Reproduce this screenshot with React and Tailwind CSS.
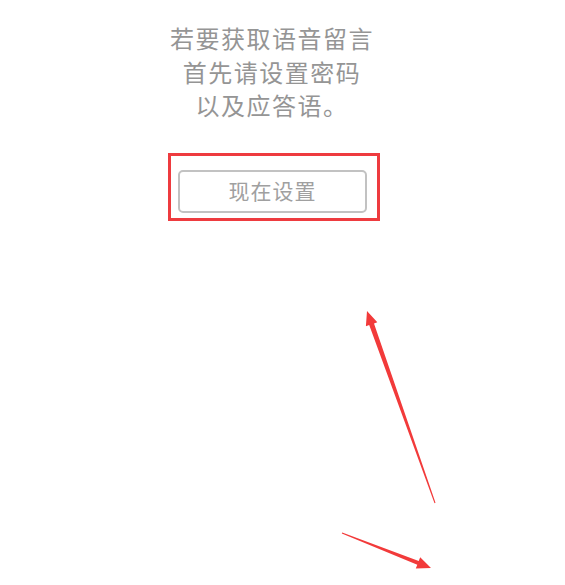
export default function App() {
  return (
    <div className="relative w-[565px] h-[585px] bg-white overflow-hidden" style={{ fontFamily: '"Noto Sans CJK SC", "Noto Sans", sans-serif' }}>
      <div className="flex flex-col items-center pt-[21px] pr-[21px]">
        <div className="text-[24px] leading-[33.5px] tracking-[1.5px] text-[#959595] text-center">
          <div>若要获取语音留言</div>
          <div>首先请设置密码</div>
          <div>以及应答语。</div>
        </div>
      </div>
      <div className="ml-[168px] mt-[31px] w-[212px] h-[68px] border-[3px] border-[#ee3b3f] pl-[7px] pr-[10px] pt-[14px] pb-[5px]">
        <div className="h-full rounded-[5px] border-2 border-[#c2c2c2] flex items-center justify-center text-[21px] tracking-[1px] text-[#a0a0a0]">
          现在设置
        </div>
      </div>
      <svg className="absolute left-0 top-0 pointer-events-none" width="565" height="585">
        <polygon points="367,311 365.9,326.2 369.2,325 434.5,503.2 435.5,502.8 374,323.4 377.3,322.2" fill="#f23a3a" />
        <polygon points="431,568 420.2,557.3 418.7,561 342.2,532.5 341.8,533.5 417.3,564.8 415.8,568.5" fill="#f23a3a" />
      </svg>
    </div>
  );
}
